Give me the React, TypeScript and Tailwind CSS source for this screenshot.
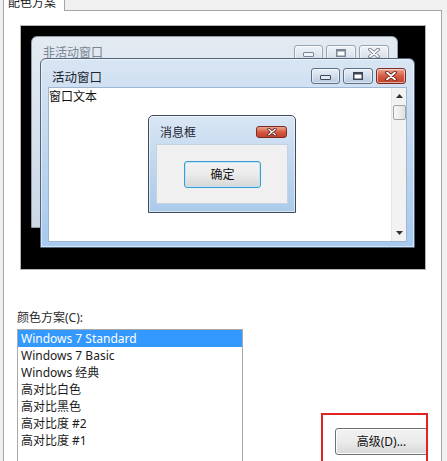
import React from 'react'

const fontCls = "font-['Noto_Sans','Noto_Sans_CJK_SC',sans-serif]"

function MinGlyph({ dim }: { dim?: boolean }) {
  return (
    <svg width="11" height="5" viewBox="0 0 11 5">
      <rect x="0.5" y="0.5" width="10" height="4" rx="0.5" fill={dim ? '#eef1f5' : '#dfe8f3'} stroke={dim ? '#7d8794' : '#3a4656'} />
    </svg>
  )
}

function MaxGlyph({ dim }: { dim?: boolean }) {
  return (
    <svg width="10" height="8" viewBox="0 0 10 8">
      <rect x="0" y="0" width="10" height="8" fill={dim ? '#7d8794' : '#3a4656'} />
      <rect x="1.5" y="2.5" width="7" height="4" fill="#ffffff" />
    </svg>
  )
}

function CloseGlyph({ dim, size = 10 }: { dim?: boolean; size?: number }) {
  return (
    <svg width={size + 2} height={size} viewBox="0 0 12 10">
      <path d="M2 1.5 L10 8.5 M10 1.5 L2 8.5" stroke={dim ? '#6f7985' : '#5a1b14'} strokeWidth="3.6" strokeLinecap="round" />
      <path d="M2 1.5 L10 8.5 M10 1.5 L2 8.5" stroke="#ffffff" strokeWidth="1.8" strokeLinecap="round" />
    </svg>
  )
}

function CaptionButtons({ dim }: { dim?: boolean }) {
  const base = 'h-[16px] rounded-[3px] border flex items-center justify-center shadow-[inset_0_0_0_1px_rgba(255,255,255,0.55)]'
  const blue = dim
    ? 'border-[#98a5b4] bg-linear-to-b from-[#f1f4f8] via-[#e2e8f0] to-[#d3dce7]'
    : 'border-[#5b6f87] bg-linear-to-b from-[#e8eff8] via-[#d1ddeb] to-[#b6c9df]'
  const red = dim
    ? 'border-[#98a5b4] bg-linear-to-b from-[#f1f4f8] via-[#e2e8f0] to-[#d3dce7]'
    : 'border-[#7b2b20] bg-linear-to-b from-[#eaa593] via-[#d65a43] to-[#c3402b]'
  return (
    <div className="flex gap-[3px]">
      <div className={`${base} ${blue} w-[29px] items-end pb-[3px]`}>
        <MinGlyph dim={dim} />
      </div>
      <div className={`${base} ${blue} w-[30px]`}>
        <MaxGlyph dim={dim} />
      </div>
      <div className={`${base} ${red} w-[30px]`}>
        <CloseGlyph dim={dim} />
      </div>
    </div>
  )
}

function Preview() {
  return (
    <div className="ml-[16px] mt-[14px] w-[406px] h-[245px] border border-[#b4b4b4] bg-black relative overflow-hidden">
      {/* Inactive window */}
      <div className="absolute left-[10px] top-[10px] w-[367px] h-[192px] rounded-t-[6px] border border-[#8f9cab] bg-linear-to-b from-[#e3eaf2] to-[#ccd8e6] flex flex-col">
        <div className="flex items-start justify-between pl-[11px] pr-[8px] pt-[8px]">
          <span className="text-[#7b8591] leading-[14px] mt-[1px]">非活动窗口</span>
          <CaptionButtons dim />
        </div>
      </div>

      {/* Active window */}
      <div className="absolute left-[19px] top-[32px] w-[375px] h-[190px] rounded-t-[6px] border border-[#52647a] bg-linear-to-b from-[#d8e5f3] via-[#bfd6ee] to-[#a7caee] flex flex-col shadow-[inset_0_0_0_1px_rgba(255,255,255,0.5)]">
        <div className="h-[28px] flex items-start justify-between pl-[11px] pr-[8px] pt-[9px]">
          <span className="text-[12.5px] leading-[16px] mt-[2px] text-[#1b2430]">活动窗口</span>
          <CaptionButtons />
        </div>
        <div className="mx-[7px] h-[155px] bg-white border border-[#9db6d1] flex">
          <div className="flex-1 pt-[1px] leading-[16px] text-[#111]">窗口文本</div>
          <div className="w-[15px] bg-[#f2f2f2] border-l border-[#e4e4e4] flex flex-col items-center">
            <svg width="7" height="4" viewBox="0 0 7 4" className="mt-[6px]">
              <path d="M0 4 L3.5 0 L7 4 Z" fill="#333" />
            </svg>
            <div className="mt-[7px] w-[13px] h-[15px] rounded-[2px] border border-[#a3a3a3] bg-linear-to-r from-[#f7f7f7] to-[#e1e1e1]" />
            <div className="flex-1" />
            <svg width="7" height="4" viewBox="0 0 7 4" className="mb-[6px]">
              <path d="M0 0 L3.5 4 L7 0 Z" fill="#333" />
            </svg>
          </div>
        </div>
      </div>

      {/* Message box */}
      <div className="absolute left-[127px] top-[89px] w-[148px] h-[98px] rounded-t-[5px] border border-[#3e4b5a] bg-linear-to-b from-[#d9e6f4] via-[#c1d7ee] to-[#abcaea] flex flex-col shadow-[inset_0_0_0_1px_rgba(255,255,255,0.5)]">
        <div className="h-[28px] flex items-start justify-between pl-[11px] pr-[8px] pt-[10px]">
          <span className="leading-[14px] text-[#1b2430]">消息框</span>
          <div className="w-[31px] h-[12px] rounded-[3px] border border-[#7b2b20] bg-linear-to-b from-[#eaa593] via-[#d65a43] to-[#c3402b] flex items-center justify-center">
            <CloseGlyph size={8} />
          </div>
        </div>
        <div className="mx-[7px] h-[60px] bg-[#f0f0f0] border border-[#c3d3e4] pl-[27px] pt-[16px]">
          <div className="w-[77px] h-[27px] rounded-[3px] border border-[#3b9ccf] bg-linear-to-b from-[#f3f3f3] via-[#ebebeb] to-[#d6d6d6] shadow-[inset_0_0_0_1px_#bfe5f6] flex items-center justify-center text-[#111]">
            确定
          </div>
        </div>
      </div>
    </div>
  )
}

const schemes = [
  'Windows 7 Standard',
  'Windows 7 Basic',
  'Windows 经典',
  '高对比白色',
  '高对比黑色',
  '高对比度 #2',
  '高对比度 #1',
]

export default function App() {
  return (
    <div className={`w-[447px] h-[461px] bg-[#f0f0f0] overflow-hidden relative flex flex-col text-[12px] text-[#1e1e1e] ${fontCls}`}>
      {/* Tab strip */}
      <div className="flex h-[11px] shrink-0">
        <div className="w-[3px]" />
        <div className="w-[62px] bg-white border-x border-[#a5a5a5] overflow-hidden">
          <div className="-mt-[4px] pl-[4px] leading-[14px] text-[#222]">配色方案</div>
        </div>
        <div className="w-[377px] border-b border-[#a5a5a5]" />
      </div>

      {/* Panel */}
      <div className="ml-[3px] w-[439px] flex-1 bg-white border-x border-[#a5a5a5] flex flex-col">
        <Preview />

        <div className="ml-[13px] mt-[40px] leading-[16px] text-[#2b2b2b]">颜色方案(C):</div>

        <div className="ml-[13px] mt-[3px] flex">
          <div className="w-[226px] h-[140px] border border-[#a9a9a9] bg-white">
            {schemes.map((s, i) => (
              <div
                key={s}
                className={`h-[17px] leading-[17px] pl-[3px] ${i === 0 ? 'bg-[#3399ff] text-white' : 'text-[#1a1a1a]'}`}
              >
                {s}
              </div>
            ))}
          </div>
          <div className="ml-[92px] mt-[99px] w-[93px] h-[27px] rounded-[3px] border border-[#707070] bg-linear-to-b from-[#f3f3f3] via-[#ebebeb] to-[#d8d8d8] shadow-[inset_0_0_0_1px_#fcfcfc] flex items-center justify-center text-[#111]">
            高级(D)...
          </div>
        </div>
      </div>

      {/* Red annotation frame */}
      <div className="absolute left-[321px] top-[413px] w-[107px] h-[60px] border-2 border-[#e02424]" />
    </div>
  )
}
